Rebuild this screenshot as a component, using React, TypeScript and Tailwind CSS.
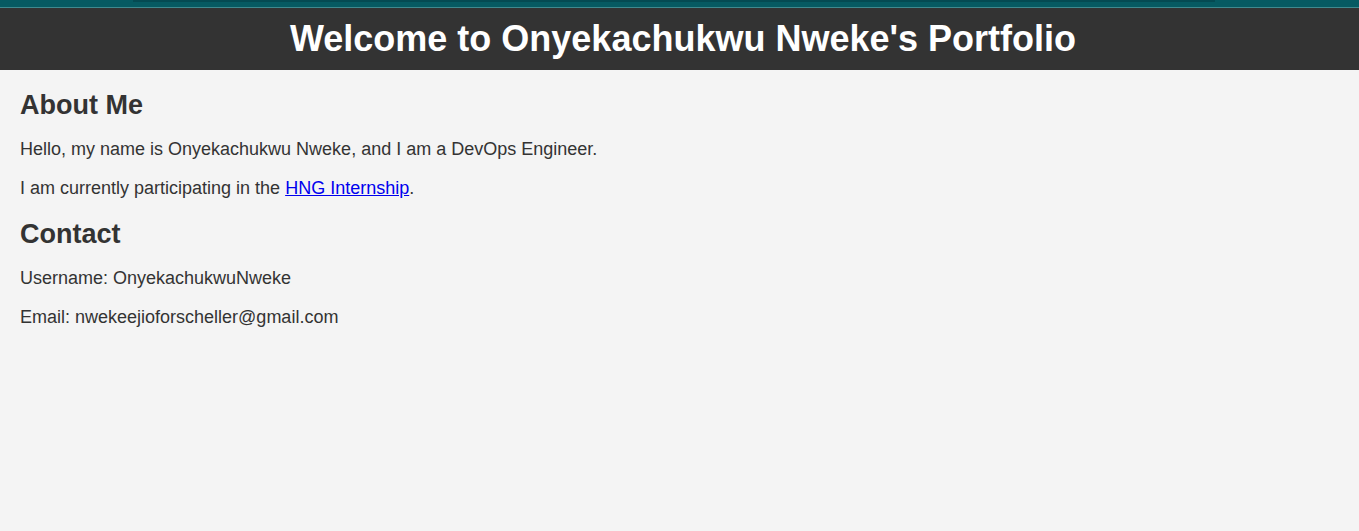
import React from "react";

export default function App() {
  return (
    <div className="min-h-[531px] bg-[#f4f4f4] text-[#333] font-['Liberation_Sans',Arial,sans-serif]">
      {/* top strip */}
      <div className="h-[7px] bg-[#065a62]">
        <div className="ml-[133px] mr-[144px] h-[2px] bg-[#054a52]" />
      </div>
      <div className="h-px bg-[#3f8a8f]" />

      {/* Header */}
      <header className="bg-[#333] text-white text-center pt-[10px] pb-[11px] pl-[7px]">
        <h1 className="m-0 text-[36px] leading-[41px] font-bold">
          Welcome to Onyekachukwu Nweke's Portfolio
        </h1>
      </header>

      <main className="px-[20px]">
        <section>
          <h2 className="pt-[20px] text-[27px] leading-[31px] font-bold">About Me</h2>
          <p className="mt-[18px] text-[18px] leading-[21px]">
            Hello, my name is Onyekachukwu Nweke, and I am a DevOps Engineer.
          </p>
          <p className="mt-[18px] text-[18px] leading-[21px]">
            I am currently participating in the{" "}
            <a href="#" className="text-[#0000ee] underline">
              HNG Internship
            </a>
            .
          </p>
        </section>

        <section>
          <h2 className="mt-[20px] text-[27px] leading-[31px] font-bold">Contact</h2>
          <p className="mt-[18px] text-[18px] leading-[21px]">Username: OnyekachukwuNweke</p>
          <p className="mt-[18px] text-[18px] leading-[21px]">Email: nwekeejioforscheller@gmail.com</p>
        </section>
      </main>
    </div>
  );
}
